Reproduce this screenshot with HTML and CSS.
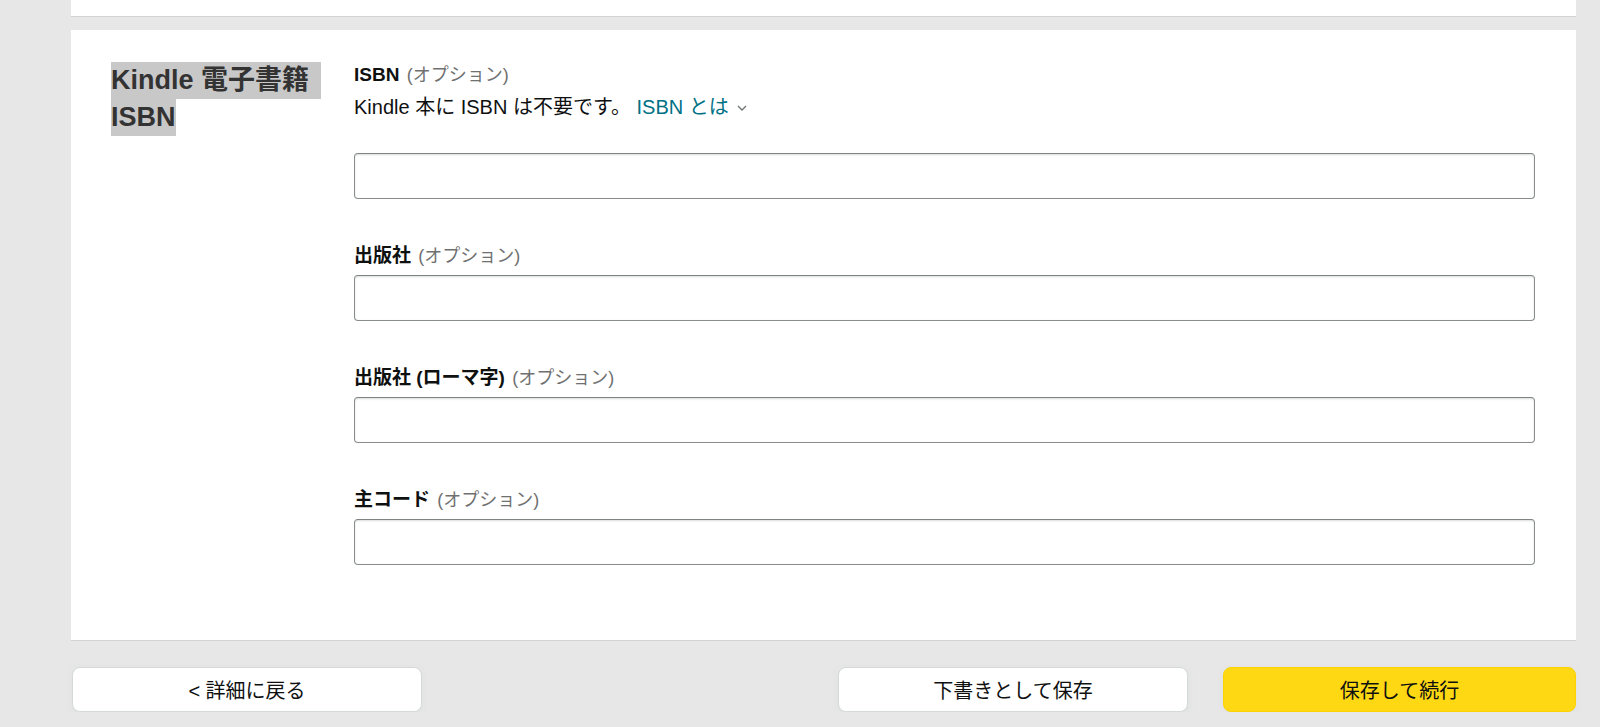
FILE: index.html
```html
<!DOCTYPE html>
<html lang="ja">
<head>
  <meta charset="utf-8">
  <title>Kindle 電子書籍 ISBN</title>
  <link rel="stylesheet" href="styles.css">
</head>
<body>

<div class="page">
  <div class="card card-prev"></div>

  <div class="card section">
    <h2 class="title">
      <span class="first">Kindle 電子書籍&nbsp;</span>
      <span>ISBN</span>
    </h2>

    <div class="fields">
      <div class="field">
        <label class="label">ISBN <span class="opt">(オプション)</span></label>
        <p class="help">Kindle 本に ISBN は不要です。 <a class="more" href="#">ISBN とは <svg class="chev" width="10" height="6" viewBox="0 0 10 6"><polyline points="1,1 5,5 9,1" fill="none" stroke="#6f7373" stroke-width="1.3"/></svg></a></p>
        <input class="input" type="text">
      </div>

      <div class="field">
        <label class="label">出版社 <span class="opt">(オプション)</span></label>
        <input class="input" type="text">
      </div>

      <div class="field">
        <label class="label">出版社 (ローマ字) <span class="opt">(オプション)</span></label>
        <input class="input" type="text">
      </div>

      <div class="field">
        <label class="label">主コード <span class="opt">(オプション)</span></label>
        <input class="input" type="text">
      </div>
    </div>
  </div>

  <div class="actions">
    <button class="btn btn-back">&lt; 詳細に戻る</button>
    <div class="actions-right">
      <button class="btn btn-draft">下書きとして保存</button>
      <button class="btn btn-save">保存して続行</button>
    </div>
  </div>
</div>

</body>
</html>
```

FILE: styles.css
```css
body {
  margin: 0;
  background-color: #e7e7e7;
  font-family: "Liberation Sans", "Noto Sans CJK JP", sans-serif;
  color: #0f1111;
}

.page {
  width: 1505px;
  margin-left: 71px;
}

.card {
  background-color: #fff;
  border-bottom: 1px solid #d3d3d3;
}
.card-prev {
  height: 16px;
  margin-bottom: 13px;
}

.section {
  display: grid;
  grid-template-columns: 243px 1fr;
  padding: 32px 41px 75px 40px;
}

.title {
  margin: 0;
  font-size: 27px;
  line-height: 37px;
  font-weight: bold;
  color: #333;
}
.title span {
  display: block;
  width: fit-content;
  background-color: #c8c8c8;
}
.title .first {
  padding-right: 4px;
}

.field + .field {
  margin-top: 44px;
}
.label {
  display: block;
  font-size: 19px;
  line-height: 26px;
  font-weight: bold;
  margin-bottom: 6px;
}
.opt {
  font-size: 18px;
  font-weight: normal;
  color: #6f7070;
  margin-left: 2px;
}

.help {
  margin: 0 0 33px;
  font-size: 20px;
  line-height: 26px;
}
.more {
  color: #007185;
  text-decoration: none;
}
.chev {
  margin-left: 3px;
  vertical-align: 3px;
}

.input {
  display: block;
  box-sizing: border-box;
  width: 100%;
  height: 46px;
  margin: 0;
  border: 1px solid #888c8c;
  border-top-color: #7f8383;
  border-radius: 4px;
  box-shadow: inset 0 1px 2px rgba(15, 17, 17, 0.15);
  background-color: #fff;
}

.actions {
  display: flex;
  justify-content: space-between;
  margin-top: 26px;
}
.actions-right {
  display: flex;
  gap: 35px;
}

.btn {
  height: 45px;
  width: 350px;
  border: 1px solid #d5d9d9;
  border-radius: 8px;
  background-color: #fff;
  box-shadow: 0 2px 5px rgba(213, 217, 217, 0.5);
  font-family: "Liberation Sans", "Noto Sans CJK JP", sans-serif;
  font-size: 20px;
  color: #0f1111;
  padding: 0;
}
.btn-back {
  margin-left: 1px;
}
.btn-save {
  width: 353px;
  background-color: #ffd814;
  border-color: #fcd200;
}
```
